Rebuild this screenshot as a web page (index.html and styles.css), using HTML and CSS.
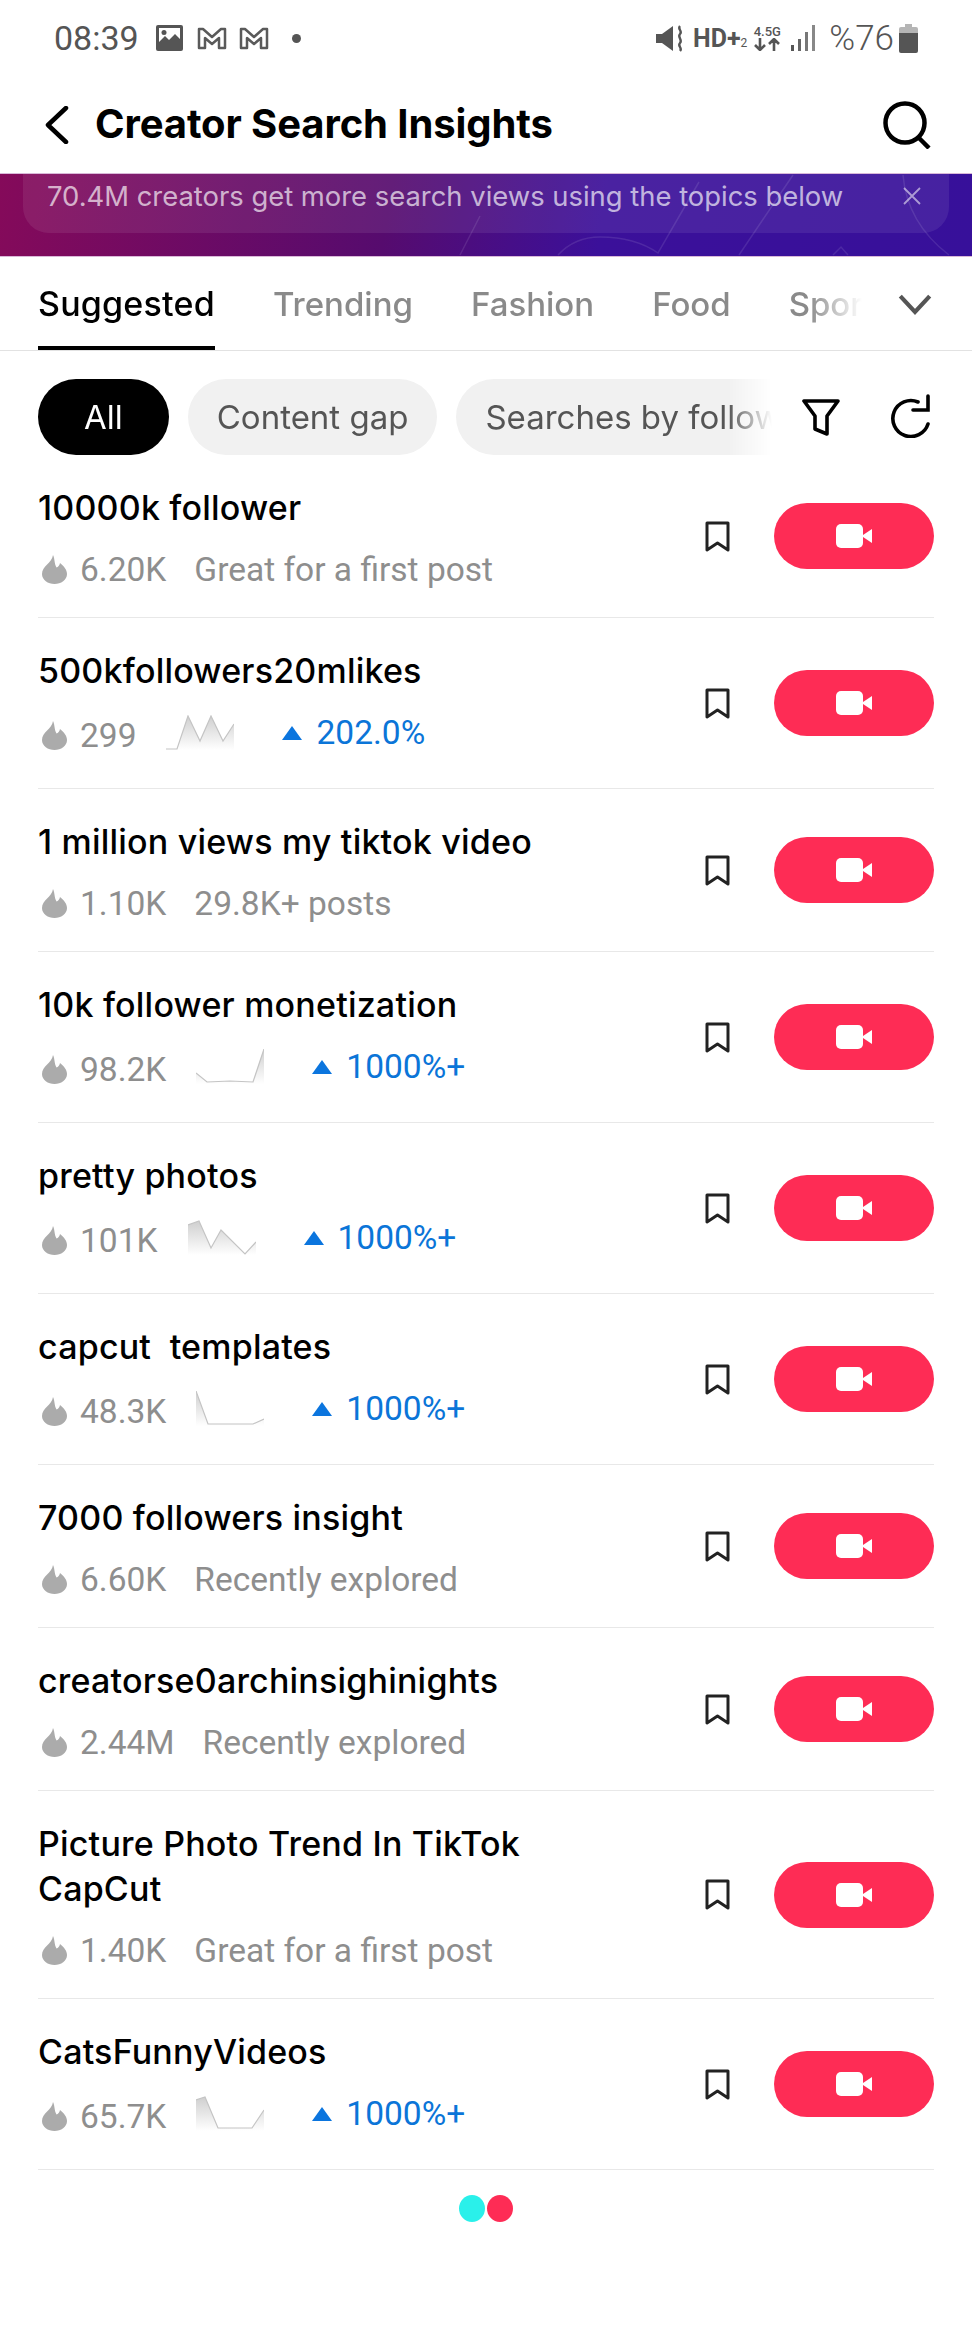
FILE: index.html
```html
<!DOCTYPE html>
<html lang="en">
<head>
    <meta charset="UTF-8">
    <meta name="viewport" content="width=device-width, initial-scale=1.0">
    <title>Creator Search Insights</title>
    <link rel="stylesheet" href="styles.css">
</head>
<body>
    <!-- shared icons -->
    <svg class="defs" width="0" height="0" aria-hidden="true">
        <defs>
            <linearGradient id="sparkfill" x1="0" y1="0" x2="0" y2="1">
                <stop offset="0" stop-color="#cfcfcf"/>
                <stop offset="1" stop-color="#ffffff"/>
            </linearGradient>
        </defs>
        <symbol id="flame" viewBox="0 0 25 29">
            <path d="M11 0C13 4 12 8 14.500 12.500C16 12 17.500 10.500 18 8C22 11 25 15 25 19C25 25 19 29 12.500 29C6 29 0 25 0 19C0 11 10 8 11 0Z" fill="#ababab"/>
        </symbol>
        <symbol id="bookmark" viewBox="0 0 25 31">
            <path d="M2 2H23V29L12.500 22L2 29Z" fill="none" stroke="#222" stroke-width="3" stroke-linejoin="round"/>
        </symbol>
        <symbol id="camera" viewBox="0 0 36 24">
            <rect width="27" height="24" rx="5" fill="#fff"/>
            <path d="M27 11L36 5V19L27 13Z" fill="#fff"/>
        </symbol>
        <symbol id="mail" viewBox="0 0 30 24">
            <path d="M2 22V3H6L15 11L24 3H28V22H22V12L15 18L8 12V22Z" fill="none" stroke="#5a5a5a" stroke-width="2.500" stroke-linejoin="round"/>
        </symbol>
        <symbol id="triangle" viewBox="0 0 20 14">
            <path d="M10 0L20 14H0Z" fill="#0b75de"/>
        </symbol>
    </svg>

    <div id="statusbar">
        <div class="status-left">
            <span class="time">08:39</span>
            <svg class="ic-gallery" viewBox="0 0 27 26">
                <rect width="27" height="26" rx="2" fill="#555"/>
                <path d="M3 3H24V14L19 9L13 15L9 11L3 17Z" fill="#fff"/>
                <circle cx="8" cy="7.500" r="2.500" fill="#555"/>
            </svg>
            <svg class="ic-mail"><use href="#mail"/></svg>
            <svg class="ic-mail"><use href="#mail"/></svg>
            <span class="status-dot"></span>
        </div>
        <div class="status-right">
            <svg class="ic-mute" viewBox="0 0 28 27">
                <path d="M0 9H6L17 1V26L6 18H0Z" fill="#555"/>
                <path d="M24 1C21 4 27 6 24 9C21 12 27 15 24 18C21 21 27 23 24 26" fill="none" stroke="#555" stroke-width="2.400"/>
            </svg>
            <span class="hd">HD+<small>2</small></span>
            <div class="network">
                <span>4.5G</span>
                <svg viewBox="0 0 26 13" width="26" height="13">
                    <path d="M6 0V11M1 7L6 12L11 7M20 13V2M15 6L20 1L25 6" fill="none" stroke="#555" stroke-width="2.600"/>
                </svg>
            </div>
            <svg class="ic-signal" viewBox="0 0 24 26">
                <rect x="0" y="20" width="3" height="6" fill="#555"/>
                <rect x="7" y="14" width="3" height="12" fill="#666"/>
                <rect x="14" y="7" width="3" height="19" fill="#777"/>
                <rect x="21" y="0" width="3" height="26" fill="#888"/>
            </svg>
            <span class="battery-text">%76</span>
            <svg class="ic-battery" viewBox="0 0 19 29">
                <path d="M6 0H13V3H17Q19 3 19 5V9H0V5Q0 3 2 3H6Z" fill="#b5b5b5"/>
                <path d="M0 9H19V27Q19 29 17 29H2Q0 29 0 27Z" fill="#555"/>
            </svg>
        </div>
    </div>

    <header id="topbar">
        <svg class="ic-back" viewBox="0 0 24 38">
            <path d="M21 2L3 19L21 36" fill="none" stroke="#000" stroke-width="4.500" stroke-linecap="round" stroke-linejoin="round"/>
        </svg>
        <h1>Creator Search Insights</h1>
        <svg class="ic-search" viewBox="0 0 48 48">
            <circle cx="22" cy="22" r="19.500" fill="none" stroke="#000" stroke-width="4.500"/>
            <path d="M35 36L46 47" fill="none" stroke="#000" stroke-width="4.500"/>
        </svg>
    </header>

    <div id="banner">
        <svg class="banner-lines" viewBox="0 0 972 82" width="972" height="82">
            <path d="M460 81L480 42M558 81C570 68 585 63 600 63C625 63 645 70 658 79L699 8M739 81L793 1M903 1C905 25 915 55 949 81M833 81L841 73L848 81" fill="none" stroke="#fff" stroke-opacity="0.100" stroke-width="1.500"/>
        </svg>
        <div class="banner-panel">
            <span>70.4M creators get more search views using the topics below</span>
            <svg class="ic-close" viewBox="0 0 18 18">
                <path d="M1 1L17 17M17 1L1 17" fill="none" stroke="#fff" stroke-opacity="0.550" stroke-width="1.800"/>
            </svg>
        </div>
    </div>

    <nav id="tabs">
        <div class="tab-scroll">
            <a class="tab active">Suggested</a>
            <a class="tab">Trending</a>
            <a class="tab">Fashion</a>
            <a class="tab">Food</a>
            <a class="tab">Sports</a>
        </div>
        <svg class="ic-more" viewBox="0 0 32 20">
            <path d="M2 2L16 17L30 2" fill="none" stroke="#555" stroke-width="4"/>
        </svg>
    </nav>

    <div id="filters">
        <div class="chip-scroll">
            <span class="chip active">All</span>
            <span class="chip">Content gap</span>
            <span class="chip">Searches by followers</span>
        </div>
        <svg class="ic-filter" viewBox="0 0 38 37">
            <path d="M2 2H36L25 17V35L13 30V17Z" fill="none" stroke="#000" stroke-width="3.600" stroke-linejoin="round"/>
        </svg>
        <svg class="ic-refresh" viewBox="0 0 42 44">
            <path d="M28 8A18 18 0 1 0 38 30" fill="none" stroke="#000" stroke-width="3.600" stroke-linecap="round"/>
            <path d="M38 2V16H23" fill="none" stroke="#000" stroke-width="3.600" stroke-linecap="round"/>
        </svg>
    </div>

    <main id="topics">
        <div class="topic">
            <div class="topic-body">
                <div class="topic-title">10000k follower</div>
                <div class="topic-meta">
                    <svg class="ic-flame"><use href="#flame"/></svg>
                    <span class="count">6.20K</span>
                    <span class="note">Great for a first post</span>
                </div>
            </div>
            <svg class="ic-bookmark"><use href="#bookmark"/></svg>
            <button class="post"><svg><use href="#camera"/></svg></button>
        </div>

        <div class="topic trending">
            <div class="topic-body">
                <div class="topic-title">500kfollowers20mlikes</div>
                <div class="topic-meta">
                    <svg class="ic-flame"><use href="#flame"/></svg>
                    <span class="count">299</span>
                    <svg class="spark" viewBox="0 0 68 35">
                        <path d="M0 34H11L22 1L34 26L45 1L57 26L68 9V35H0Z" fill="url(#sparkfill)"/>
                        <path d="M0 34H11L22 1L34 26L45 1L57 26L68 9" fill="none" stroke="#c4c4c4" stroke-width="1.200"/>
                    </svg>
                    <svg class="ic-up"><use href="#triangle"/></svg>
                    <span class="rise">202.0%</span>
                </div>
            </div>
            <svg class="ic-bookmark"><use href="#bookmark"/></svg>
            <button class="post"><svg><use href="#camera"/></svg></button>
        </div>

        <div class="topic">
            <div class="topic-body">
                <div class="topic-title">1 million views my tiktok video</div>
                <div class="topic-meta">
                    <svg class="ic-flame"><use href="#flame"/></svg>
                    <span class="count">1.10K</span>
                    <span class="note">29.8K+ posts</span>
                </div>
            </div>
            <svg class="ic-bookmark"><use href="#bookmark"/></svg>
            <button class="post"><svg><use href="#camera"/></svg></button>
        </div>

        <div class="topic trending">
            <div class="topic-body">
                <div class="topic-title">10k follower monetization</div>
                <div class="topic-meta">
                    <svg class="ic-flame"><use href="#flame"/></svg>
                    <span class="count">98.2K</span>
                    <svg class="spark" viewBox="0 0 68 35">
                        <path d="M0 24L11 33L34 32L57 33L68 0V35H0Z" fill="url(#sparkfill)"/>
                        <path d="M0 24L11 33L34 32L57 33L68 0" fill="none" stroke="#c4c4c4" stroke-width="1.200"/>
                    </svg>
                    <svg class="ic-up"><use href="#triangle"/></svg>
                    <span class="rise">1000%+</span>
                </div>
            </div>
            <svg class="ic-bookmark"><use href="#bookmark"/></svg>
            <button class="post"><svg><use href="#camera"/></svg></button>
        </div>

        <div class="topic trending">
            <div class="topic-body">
                <div class="topic-title">pretty photos</div>
                <div class="topic-meta">
                    <svg class="ic-flame"><use href="#flame"/></svg>
                    <span class="count">101K</span>
                    <svg class="spark" viewBox="0 0 68 35">
                        <path d="M0 5L11 1L23 28L33 10L57 34L68 22V35H0Z" fill="url(#sparkfill)"/>
                        <path d="M0 5L11 1L23 28L33 10L57 34L68 22" fill="none" stroke="#c4c4c4" stroke-width="1.200"/>
                    </svg>
                    <svg class="ic-up"><use href="#triangle"/></svg>
                    <span class="rise">1000%+</span>
                </div>
            </div>
            <svg class="ic-bookmark"><use href="#bookmark"/></svg>
            <button class="post"><svg><use href="#camera"/></svg></button>
        </div>

        <div class="topic trending">
            <div class="topic-body">
                <div class="topic-title">capcut&nbsp; templates</div>
                <div class="topic-meta">
                    <svg class="ic-flame"><use href="#flame"/></svg>
                    <span class="count">48.3K</span>
                    <svg class="spark" viewBox="0 0 68 35">
                        <path d="M0 0L12 33H57L68 28V35H0Z" fill="url(#sparkfill)"/>
                        <path d="M0 0L12 33H57L68 28" fill="none" stroke="#c4c4c4" stroke-width="1.200"/>
                    </svg>
                    <svg class="ic-up"><use href="#triangle"/></svg>
                    <span class="rise">1000%+</span>
                </div>
            </div>
            <svg class="ic-bookmark"><use href="#bookmark"/></svg>
            <button class="post"><svg><use href="#camera"/></svg></button>
        </div>

        <div class="topic">
            <div class="topic-body">
                <div class="topic-title">7000 followers insight</div>
                <div class="topic-meta">
                    <svg class="ic-flame"><use href="#flame"/></svg>
                    <span class="count">6.60K</span>
                    <span class="note">Recently explored</span>
                </div>
            </div>
            <svg class="ic-bookmark"><use href="#bookmark"/></svg>
            <button class="post"><svg><use href="#camera"/></svg></button>
        </div>

        <div class="topic">
            <div class="topic-body">
                <div class="topic-title">creatorse0archinsighinights</div>
                <div class="topic-meta">
                    <svg class="ic-flame"><use href="#flame"/></svg>
                    <span class="count">2.44M</span>
                    <span class="note">Recently explored</span>
                </div>
            </div>
            <svg class="ic-bookmark"><use href="#bookmark"/></svg>
            <button class="post"><svg><use href="#camera"/></svg></button>
        </div>

        <div class="topic tall">
            <div class="topic-body">
                <div class="topic-title">Picture Photo Trend In TikTok CapCut</div>
                <div class="topic-meta">
                    <svg class="ic-flame"><use href="#flame"/></svg>
                    <span class="count">1.40K</span>
                    <span class="note">Great for a first post</span>
                </div>
            </div>
            <svg class="ic-bookmark"><use href="#bookmark"/></svg>
            <button class="post"><svg><use href="#camera"/></svg></button>
        </div>

        <div class="topic trending">
            <div class="topic-body">
                <div class="topic-title">CatsFunnyVideos</div>
                <div class="topic-meta">
                    <svg class="ic-flame"><use href="#flame"/></svg>
                    <span class="count">65.7K</span>
                    <svg class="spark" viewBox="0 0 68 35">
                        <path d="M0 4L9 1L22 32H56L68 14V35H0Z" fill="url(#sparkfill)"/>
                        <path d="M0 4L9 1L22 32H56L68 14" fill="none" stroke="#c4c4c4" stroke-width="1.200"/>
                    </svg>
                    <svg class="ic-up"><use href="#triangle"/></svg>
                    <span class="rise">1000%+</span>
                </div>
            </div>
            <svg class="ic-bookmark"><use href="#bookmark"/></svg>
            <button class="post"><svg><use href="#camera"/></svg></button>
        </div>
    </main>

    <div id="loader">
        <span class="dot cyan"></span>
        <span class="dot red"></span>
    </div>
</body>
</html>
```

FILE: styles.css
```css
body {
    margin: 0;
    background: #fff;
    color: #000;
    font-family: "Inter", "Roboto", sans-serif;
}
.defs {
    display: block;
}

/* status bar */
#statusbar {
    height: 76px;
    padding: 0 54px 0 54px;
    display: flex;
    justify-content: space-between;
    align-items: center;
    box-sizing: border-box;
    color: #555;
    font-family: "Roboto", sans-serif;
}
.status-left, .status-right {
    display: flex;
    align-items: center;
}
.time {
    font-size: 34px;
    margin-right: 17px;
}
.ic-gallery {
    width: 27px;
    height: 26px;
    margin-right: 14px;
}
.ic-mail {
    width: 30px;
    height: 24px;
    margin-right: 12px;
}
.status-dot {
    width: 9px;
    height: 9px;
    margin-left: 11px;
    border-radius: 50%;
    background: #555;
}
.ic-mute {
    width: 28px;
    height: 27px;
    margin-right: 9px;
}
.hd {
    font-size: 25px;
    font-weight: 700;
    margin-right: 5px;
    white-space: nowrap;
}
.hd small {
    font-size: 12px;
    font-weight: 400;
}
.network {
    width: 30px;
    display: flex;
    flex-direction: column;
    align-items: center;
    font-size: 13px;
    font-weight: 500;
    line-height: 13px;
    margin-right: 9px;
}
.ic-signal {
    width: 24px;
    height: 26px;
    margin-right: 14px;
}
.battery-text {
    font-size: 35px;
    font-weight: 300;
    margin-right: 5px;
}
.ic-battery {
    width: 19px;
    height: 29px;
}

/* header */
#topbar {
    height: 98px;
    padding: 0 41px 0 45px;
    display: flex;
    align-items: center;
    box-sizing: border-box;
}
.ic-back {
    width: 24px;
    height: 38px;
    margin-right: 26px;
}
h1 {
    flex: 1;
    margin: 0 0 3px;
    font-size: 40px;
    font-weight: 700;
    letter-spacing: -0.1px;
}
.ic-search {
    width: 48px;
    height: 48px;
}

/* promo banner */
#banner {
    position: relative;
    height: 82px;
    padding: 0 23px;
    box-sizing: border-box;
    background: linear-gradient(100deg, #850a5a 0%, #560b6e 40%, #3b109a 62%, #37109a 100%);
    box-shadow: 0 -1px 0 #d9b8d8, 0 1px 0 #d9b8d8;
}
.banner-lines {
    position: absolute;
    top: 0;
    left: 0;
}
.banner-panel {
    position: relative;
    height: 59px;
    padding: 0 28px 16px 24px;
    display: flex;
    justify-content: space-between;
    align-items: center;
    box-sizing: border-box;
    border-radius: 0 0 26px 26px;
    background: rgba(255, 255, 255, 0.08);
    color: rgba(255, 255, 255, 0.68);
    font-size: 27.4px;
}
.ic-close {
    width: 18px;
    height: 18px;
}

/* tabs */
#tabs {
    height: 95px;
    padding: 0 38px;
    display: flex;
    justify-content: space-between;
    align-items: center;
    box-sizing: border-box;
    border-bottom: 1px solid #e2e2e2;
}
.tab-scroll {
    width: 824px;
    height: 100%;
    display: flex;
    gap: 58px;
    overflow: hidden;
    -webkit-mask-image: linear-gradient(to right, #000 770px, transparent 824px);
    mask-image: linear-gradient(to right, #000 770px, transparent 824px);
}
.tab {
    height: 100%;
    padding-top: 24px;
    box-sizing: border-box;
    font-size: 33px;
    font-weight: 500;
    line-height: 48px;
    color: #8a8a8a;
    white-space: nowrap;
}
.tab.active {
    font-size: 34px;
    letter-spacing: 0.2px;
    color: #000;
    border-bottom: 4px solid #000;
}
.ic-more {
    width: 34px;
    height: 21px;
    margin: 2px 2px 0 0;
}

/* filter chips */
#filters {
    height: 104px;
    padding: 28px 38px 0;
    display: flex;
    box-sizing: border-box;
}
.chip-scroll {
    width: 734px;
    height: 76px;
    display: flex;
    gap: 19px;
    overflow: hidden;
    -webkit-mask-image: linear-gradient(to right, #000 690px, transparent 734px);
    mask-image: linear-gradient(to right, #000 690px, transparent 734px);
}
.chip {
    height: 76px;
    padding: 0 29px;
    flex: none;
    box-sizing: border-box;
    border-radius: 38px;
    background: #f1f1f1;
    color: #555;
    font-size: 33px;
    line-height: 76px;
    white-space: nowrap;
}
.chip.active {
    padding: 0 46px;
    background: #000;
    color: #fff;
}
.ic-filter {
    flex: none;
    width: 38px;
    height: 37px;
    margin: 20px 50px 0 30px;
}
.ic-refresh {
    flex: none;
    width: 42px;
    height: 44px;
    margin-top: 15px;
}

/* topic rows */
#topics {
    margin: 0 38px;
}
.topic {
    height: 163px;
    display: flex;
    align-items: center;
    box-sizing: border-box;
    border-bottom: 1px solid #e8e8e8;
}
.topic.trending {
    height: 171px;
}
.topic.tall {
    height: 208px;
}
.topic-body {
    flex: 1;
    align-self: flex-start;
    padding-top: 30px;
}
.topic-title {
    width: 560px;
    font-size: 34px;
    font-weight: 500;
    letter-spacing: 0.2px;
    line-height: 45px;
}
.topic-meta {
    height: 46px;
    margin-top: 16px;
    display: flex;
    align-items: center;
    color: #8e8e8e;
    font-family: "Roboto", sans-serif;
    font-size: 33.5px;
}
.trending .topic-meta {
    height: 52px;
}
.ic-flame {
    width: 25px;
    height: 29px;
    margin: 0 13px 0 4px;
}
.note {
    margin-left: 28px;
}
.spark {
    width: 68px;
    height: 35px;
    margin: 0 48px 6px 30px;
}
.ic-up {
    width: 20px;
    height: 14px;
    margin: 0 14px 4px 0;
}
.rise {
    margin-bottom: 6px;
    color: #0b75d8;
}
.ic-bookmark {
    width: 25px;
    height: 31px;
    margin-right: 44px;
}
.post {
    width: 160px;
    height: 66px;
    padding: 0;
    display: flex;
    justify-content: center;
    align-items: center;
    border: none;
    border-radius: 33px;
    background: #fe2c55;
}
.post svg {
    width: 36px;
    height: 24px;
}

/* load more dots */
#loader {
    padding-top: 25px;
    display: flex;
    justify-content: center;
    gap: 2px;
}
.dot {
    width: 26px;
    height: 27px;
    border-radius: 50%;
}
.dot.cyan {
    background: #2af0ea;
}
.dot.red {
    background: #fe2c55;
}
```
